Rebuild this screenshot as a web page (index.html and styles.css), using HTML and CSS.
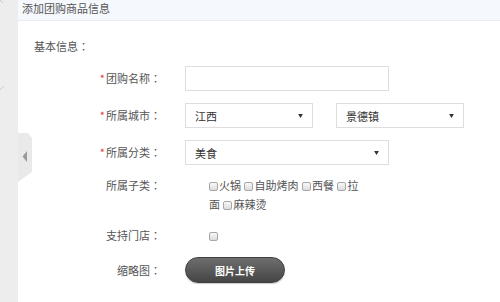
FILE: index.html
```html
<!DOCTYPE html>
<html lang="zh-CN">
<head>
  <meta charset="UTF-8" />
  <title>添加团购商品信息</title>
  <link rel="stylesheet" href="styles.css">
</head>
<body>
<div class="page">
  <aside class="sidebar">
    <svg width="18" height="302" viewBox="0 0 18 302">
      <path d="M0 0 L3 3" stroke="#c9c9c9" stroke-width="1" fill="none"/>
      <path d="M0 90 L4 86" stroke="#c9c9c9" stroke-width="1" fill="none"/>
    </svg>
  </aside>

  <main class="main">
    <div class="head">添加团购商品信息</div>
    <div class="body">
      <div class="section-title">基本信息<span class="colon" lang="zh-TW">：</span></div>

      <div class="form">
        <div class="row">
          <label class="label"><em>*</em>团购名称<span class="colon" lang="zh-TW">：</span></label>
          <div class="ctl"><input class="text" type="text"></div>
        </div>

        <div class="row">
          <label class="label"><em>*</em>所属城市<span class="colon" lang="zh-TW">：</span></label>
          <div class="ctl pair">
            <div class="select small"><span>江西</span><svg class="arrow" width="6" height="5" viewBox="0 0 6 5"><polygon points="0,0 6,0 3,5" fill="#333"/></svg></div>
            <div class="select small"><span>景德镇</span><svg class="arrow" width="6" height="5" viewBox="0 0 6 5"><polygon points="0,0 6,0 3,5" fill="#333"/></svg></div>
          </div>
        </div>

        <div class="row">
          <label class="label"><em>*</em>所属分类<span class="colon" lang="zh-TW">：</span></label>
          <div class="ctl"><div class="select wide"><span>美食</span><svg class="arrow" width="6" height="5" viewBox="0 0 6 5"><polygon points="0,0 6,0 3,5" fill="#333"/></svg></div></div>
        </div>

        <div class="row top">
          <label class="label">所属子类<span class="colon" lang="zh-TW">：</span></label>
          <div class="ctl checks">
            <span class="cb"></span>火锅 <span class="cb"></span>自助烤肉 <span class="cb"></span>西餐 <span class="cb"></span>拉<wbr>面 <span class="cb"></span>麻辣烫
          </div>
        </div>

        <div class="row">
          <label class="label">支持门店<span class="colon" lang="zh-TW">：</span></label>
          <div class="ctl checks single"><span class="cb first"></span></div>
        </div>

        <div class="row">
          <label class="label">缩略图<span class="colon" lang="zh-TW">：</span></label>
          <div class="ctl"><button class="upload">图片上传</button></div>
        </div>
      </div>
    </div>
  </main>

  <div class="toggle">
    <svg width="14" height="49" viewBox="0 0 14 49">
      <polygon points="0,0 10,0 14,5 14,39 0,49" fill="#e9e9e9"/>
      <polygon points="9,18 9,29 4.5,23.5" fill="#9a9a9a"/>
    </svg>
  </div>
</div>
</body>
</html>
```

FILE: styles.css
```css
* { box-sizing: border-box; }
body {
  margin: 0;
  background: #fff;
  font-family: "Noto Sans CJK SC", "Liberation Sans", sans-serif;
  font-size: 11px;
  color: #555;
}
.page {
  display: flex;
  height: 302px;
  width: 500px;
  overflow: hidden;
  position: relative;
}
.sidebar {
  width: 18px;
  flex: none;
  background: #ededed;
}
.sidebar svg { display: block; }
.main {
  flex: 1;
}
.head {
  height: 21px;
  line-height: 16px;
  padding: 0 0 0 4px;
  background: #f5f9fd;
  border-bottom: 1px solid #e6ecf1;
  color: #555;
  font-size: 11px;
}
.body {
  padding: 17px 0 0 16px;
}
.section-title {
  line-height: 16px;
}
.colon {
  font-family: "Noto Sans CJK TC", "Noto Sans CJK SC", sans-serif;
}
.form {
  margin-top: 12px;
  display: flex;
  flex-direction: column;
  gap: 12px;
}
.row {
  display: grid;
  grid-template-columns: 127px auto;
  column-gap: 24px;
  align-items: center;
}
.row.top { align-items: start; margin-top: -1px; }
.label {
  text-align: right;
  line-height: 19px;
  color: #555;
}
.label em {
  font-style: normal;
  color: #e4393c;
  margin-right: 1px;
}
.text {
  display: block;
  width: 204px;
  height: 25px;
  border: 1px solid #dedede;
  margin: 0;
  padding: 0 8px;
  outline: none;
}
.pair {
  display: flex;
  gap: 23px;
}
.select {
  display: flex;
  align-items: center;
  justify-content: space-between;
  height: 25px;
  border: 1px solid #dedede;
  padding: 0 9px 0 9px;
  color: #333;
}
.select.small { width: 128px; }
.select.wide { width: 204px; }
.select .arrow {
  display: block;
  width: 5px;
  height: 4px;
}
.checks {
  padding-left: 24px;
  width: 182px;
  line-height: 19px;
  color: #555;
}
.cb {
  display: inline-block;
  width: 9px;
  height: 9px;
  border: 1px solid #a7a7a7;
  border-radius: 2px;
  background: linear-gradient(#f8f8f8, #dcdcdc);
  margin: 0 1px 0 1px;
  vertical-align: -1px;
}
.cb.first, .checks .cb:first-child { margin-left: 0; }
.upload {
  display: block;
  width: 100px;
  height: 26px;
  border: 1px solid #3f3f3f;
  border-radius: 13px;
  background: linear-gradient(#6e6e6e, #454545);
  color: #fff;
  font-family: "Noto Sans CJK SC", sans-serif;
  font-size: 10px;
  font-weight: bold;
  padding: 0;
  box-shadow: 0 1px 1px rgba(0, 0, 0, 0.2);
}
.toggle {
  position: absolute;
  left: 18px;
  top: 133px;
}
.toggle svg { display: block; }
```
